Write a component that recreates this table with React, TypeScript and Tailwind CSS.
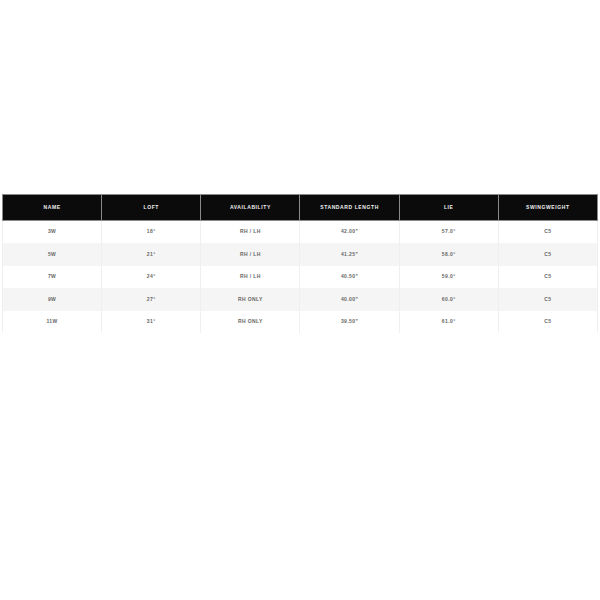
import React from "react";

const headers = ["NAME", "LOFT", "AVAILABILITY", "STANDARD LENGTH", "LIE", "SWINGWEIGHT"];
const rows = [
  ["3W", "18°", "RH / LH", "42.00\"", "57.0°", "C5"],
  ["5W", "21°", "RH / LH", "41.25\"", "58.0°", "C5"],
  ["7W", "24°", "RH / LH", "40.50\"", "59.0°", "C5"],
  ["9W", "27°", "RH ONLY", "40.00\"", "60.0°", "C5"],
  ["11W", "31°", "RH ONLY", "39.50\"", "61.0°", "C5"],
];

export default function App() {
  return (
    <div className="w-[600px] h-[600px] bg-white pt-[194px] px-[2px]" style={{ fontFamily: '"Liberation Sans", Arial, sans-serif' }}>
      <table className="w-[596px] border-collapse table-fixed">
        <thead>
          <tr className="h-[26px]">
            {headers.map((h) => (
              <th
                key={h}
                className="bg-[#0b0b0b] text-[#f0f0f0] text-[5px] font-bold tracking-[0.6px] border border-[#8a8a8a] align-middle"
              >
                {h}
              </th>
            ))}
          </tr>
        </thead>
        <tbody>
          {rows.map((r, i) => (
            <tr key={i} className={i % 2 === 1 ? "h-[22.6px] bg-[#f5f5f5]" : "h-[22.6px] bg-white"}>
              {r.map((c, j) => (
                <td
                  key={j}
                  className="text-center text-[5px] text-[#666] font-bold tracking-[0.4px] border-x border-[#efefef] align-middle"
                >
                  {c}
                </td>
              ))}
            </tr>
          ))}
        </tbody>
      </table>
    </div>
  );
}
